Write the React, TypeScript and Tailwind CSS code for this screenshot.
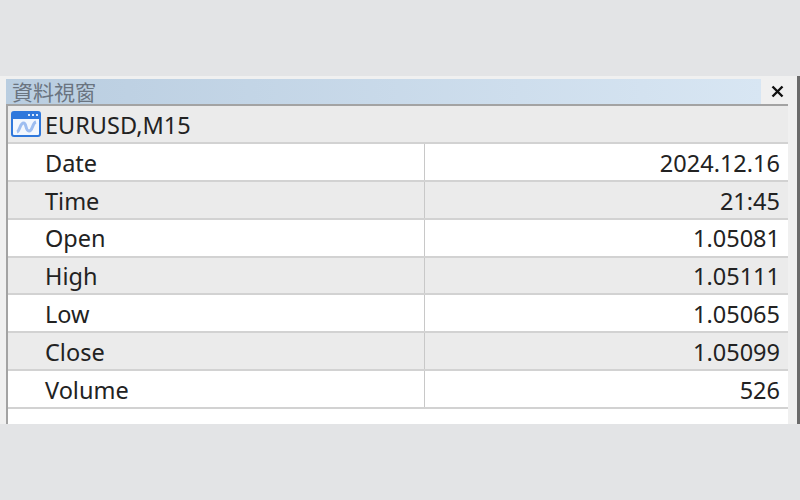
const ROWS = [
  { label: 'Date', value: '2024.12.16' },
  { label: 'Time', value: '21:45' },
  { label: 'Open', value: '1.05081' },
  { label: 'High', value: '1.05111' },
  { label: 'Low', value: '1.05065' },
  { label: 'Close', value: '1.05099' },
  { label: 'Volume', value: '526' },
];

function SymbolIcon() {
  return (
    <svg width="30" height="26" viewBox="0 0 30 26" className="shrink-0">
      <rect x="1" y="1" width="28" height="24" rx="2" fill="#f2f7fe" stroke="#2f78dc" strokeWidth="2" />
      <rect x="1" y="1" width="28" height="7" fill="#2f78dc" />
      <rect x="17" y="3" width="2" height="2" fill="#dce9fa" />
      <rect x="21" y="3" width="2" height="2" fill="#dce9fa" />
      <rect x="25" y="3" width="2" height="2" fill="#dce9fa" />
      <path d="M6 21 C9 20 9 12 12.5 12 C16 12 14 20 18 20 C22 20 21 12 25 11" fill="none" stroke="#9dbdf0" strokeWidth="3" />
    </svg>
  );
}

export default function App() {
  return (
    <div className="h-[500px] w-[800px] overflow-hidden bg-[#e3e4e6] pt-[76px] font-['Noto_Sans','Noto_Sans_CJK_TC',sans-serif] text-[#222]">
      <div className="flex h-[348px] border-r-[3px] border-[#6b6b6b] bg-[#f0f0f0] pt-[3px] pl-[6px]">
        <div className="flex min-w-0 flex-1 flex-col">
          <div className="flex h-[25px] shrink-0">
            <div className="flex w-[755px] items-center bg-gradient-to-r from-[#b9cde0] to-[#d8e6f3] pl-[6px] font-['Noto_Sans_CJK_TC',sans-serif] text-[21px] leading-[25px] text-[#6a7480]">
              資料視窗
            </div>
            <div className="flex flex-1 items-center justify-center pr-[3px] text-[#111]">
              <svg width="13" height="13" viewBox="0 0 13 13">
                <path d="M1.5 1.5 L11.5 11.5 M11.5 1.5 L1.5 11.5" stroke="currentColor" strokeWidth="2.4" fill="none" />
              </svg>
            </div>
          </div>
          <div className="mr-[9px] flex min-h-0 flex-1 flex-col border-t-2 border-l-2 border-[#a3a3a3] bg-white">
            <div className="flex h-[38px] shrink-0 items-center gap-[4px] border-b-2 border-[#d2d2d2] bg-[#ebebeb] pl-[3px] text-[23.5px] leading-none">
              <SymbolIcon />
              <span className="pt-[3px]">EURUSD,M15</span>
            </div>
            {ROWS.map((row, i) => (
              <div
                key={row.label}
                className={`flex h-[37.85px] shrink-0 border-b-2 border-[#d2d2d2] pt-[3px] text-[23.5px] leading-none ${i % 2 === 1 ? 'bg-[#ebebeb]' : 'bg-white'}`}
              >
                <div className="-mt-[3px] flex w-[417px] items-center border-r border-[#c8c8c8] pt-[3px] pl-[37px]">{row.label}</div>
                <div className="flex flex-1 items-center justify-end pr-[8px]">{row.value}</div>
              </div>
            ))}
          </div>
        </div>
      </div>
    </div>
  );
}
